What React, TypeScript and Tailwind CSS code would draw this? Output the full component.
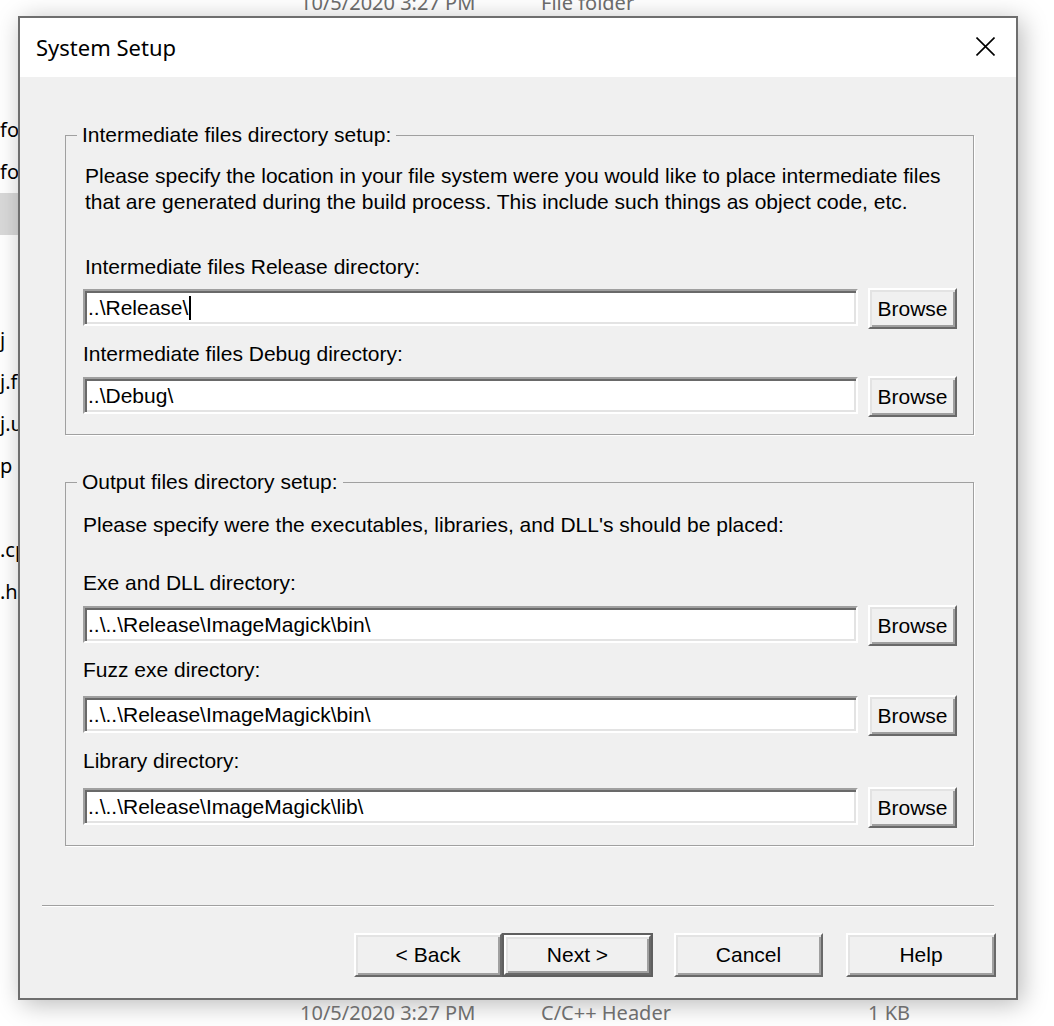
import React from 'react';

const ui = "font-['Liberation_Sans',Arial,sans-serif] text-[21px] leading-[26px] text-black";
const shell = "font-['Noto_Sans','Open_Sans',sans-serif]";

const RaisedButton: React.FC<{ className?: string; children: React.ReactNode }> = ({ className = '', children }) => (
  <button
    type="button"
    className={`flex items-center justify-center border-2 border-t-white border-l-white border-r-[#696969] border-b-[#696969] bg-[#f0f0f0] shadow-[inset_2px_2px_0_#e3e3e3,inset_-2px_-2px_0_#a0a0a0] ${className}`}
  >
    {children}
  </button>
);

const PathField: React.FC<{ value: string; caret?: boolean }> = ({ value, caret }) => (
  <div className="flex items-start">
    <div className="mt-[1px] flex h-[37px] flex-1 items-center whitespace-pre border-2 border-t-[#a0a0a0] border-l-[#a0a0a0] border-r-white border-b-white bg-white pl-[3px] shadow-[inset_2px_2px_0_#696969,inset_-2px_-2px_0_#e3e3e3]">
      {value}
      {caret && <span className="ml-[1px] h-[24px] w-[2px] bg-black" />}
    </div>
    <RaisedButton className="ml-[10px] h-[41px] w-[89px]">Browse</RaisedButton>
  </div>
);

const leftRows = ['fo', 'fo', '', '', '', 'j', 'j.filters', 'j.user', 'p', '', '.cpp', '.h'];

export default function App() {
  return (
    <div className="h-[1026px] w-[1054px] overflow-hidden bg-white">
      {/* explorer list behind the dialog */}
      <div className={`h-[16px] overflow-hidden ${shell} text-[20px] leading-[26px] text-[#6d6d6d]`}>
        <div className="-mt-[10px] flex whitespace-nowrap pl-[300px]">
          <span className="w-[241px]">10/5/2020 3:27 PM</span>
          <span>File folder</span>
        </div>
      </div>

      <div className="flex h-[984px]">
        <div className={`w-[18px] overflow-hidden pt-[93px] ${shell} text-[20px] text-black`}>
          {leftRows.map((t, i) => (
            <div
              key={i}
              className={`h-[42px] whitespace-nowrap leading-[42px] ${i === 2 ? 'bg-[#d9d9d9]' : ''}`}
            >
              {t}
            </div>
          ))}
        </div>

        {/* dialog window */}
        <div className="flex h-[984px] w-[1000px] flex-col border-2 border-[#6e6e6e] bg-[#f0f0f0] shadow-[4px_4px_24px_rgba(0,0,0,0.28)]">
          <div className="flex h-[59px] items-center justify-between bg-white pl-[16px] pr-[21px]">
            <span className={`${shell} text-[22px] text-black`}>System Setup</span>
            <svg width="19" height="19" viewBox="0 0 19 19" className="mb-[3px]">
              <path d="M0.5 0.5 L18.5 18.5 M18.5 0.5 L0.5 18.5" stroke="#000" strokeWidth="1.6" fill="none" />
            </svg>
          </div>

          <div className={`flex-1 ${ui}`}>
            <div className="pl-[45px] pr-[42px] pt-[45px]">
              <fieldset className="border border-[#a0a0a0] px-[11px] pb-[17px] pt-[15px] shadow-[1px_1px_0_#fff]">
                <legend className="px-[5px]">Intermediate files directory setup:</legend>
                <div className="pl-[6px] pr-[5px]">
                  <p className="whitespace-nowrap pl-[2px]">
                    Please specify the location in your file system were you would like to place intermediate files
                    <br />
                    that are generated during the build process. This include such things as object code, etc.
                  </p>
                  <p className="mt-[39px] pl-[2px]">Intermediate files Release directory:</p>
                  <div className="mt-[8px]">
                    <PathField value="..\Release\" caret />
                  </div>
                  <p className="mt-[12px]">Intermediate files Debug directory:</p>
                  <div className="mt-[9px]">
                    <PathField value="..\Debug\" />
                  </div>
                </div>
              </fieldset>

              <fieldset className="mt-[34px] border border-[#a0a0a0] px-[11px] pb-[17px] pt-[17px] shadow-[1px_1px_0_#fff]">
                <legend className="px-[5px]">Output files directory setup:</legend>
                <div className="pl-[6px] pr-[5px]">
                  <p className="whitespace-nowrap">
                    Please specify were the executables, libraries, and DLL's should be placed:
                  </p>
                  <p className="mt-[32px]">Exe and DLL directory:</p>
                  <div className="mt-[9px]">
                    <PathField value="..\..\Release\ImageMagick\bin\" />
                  </div>
                  <p className="mt-[11px]">Fuzz exe directory:</p>
                  <div className="mt-[12px]">
                    <PathField value="..\..\Release\ImageMagick\bin\" />
                  </div>
                  <p className="mt-[12px]">Library directory:</p>
                  <div className="mt-[13px]">
                    <PathField value="..\..\Release\ImageMagick\lib\" />
                  </div>
                </div>
              </fieldset>
            </div>

            <div className="mx-[22px] mt-[59px] h-[2px] border-b border-t border-b-white border-t-[#a0a0a0]" />

            <div className="mt-[26px] flex justify-end pr-[20px]">
              <RaisedButton className="h-[44px] w-[148px]">&lt; Back</RaisedButton>
              <div className="flex h-[44px] w-[151px] border-2 border-[#5f5f5f]">
                <RaisedButton className="h-full w-full">Next &gt;</RaisedButton>
              </div>
              <RaisedButton className="ml-[21px] h-[44px] w-[149px]">Cancel</RaisedButton>
              <RaisedButton className="ml-[23px] h-[44px] w-[150px]">Help</RaisedButton>
            </div>
          </div>
        </div>
      </div>

      <div className={`flex h-[26px] whitespace-nowrap pl-[300px] ${shell} text-[20px] leading-[26px] text-[#6d6d6d]`}>
        <span className="w-[241px]">10/5/2020 3:27 PM</span>
        <span className="w-[327px]">C/C++ Header</span>
        <span>1 KB</span>
      </div>
    </div>
  );
}
